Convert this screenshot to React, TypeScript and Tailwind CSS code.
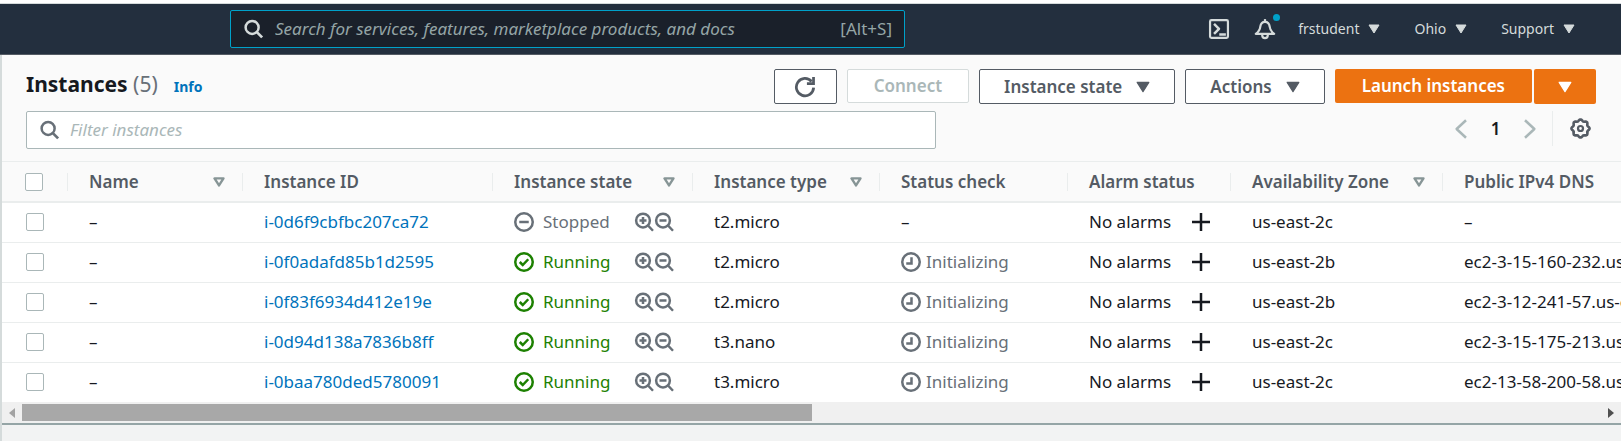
import type { ReactNode } from "react";

type IconProps = { className?: string };

function Icon({ className = "", children }: IconProps & { children: ReactNode }) {
  return (
    <svg
      viewBox="0 0 16 16"
      className={`shrink-0 ${className}`}
      fill="none"
      stroke="currentColor"
      strokeWidth="2"
      strokeLinejoin="round"
      aria-hidden="true"
    >
      {children}
    </svg>
  );
}

const SearchIcon = ({ className }: IconProps) => (
  <Icon className={className}>
    <circle cx="6.5" cy="6.7" r="5.2" />
    <path d="M10.3 10.5 14.5 14.7" strokeWidth="2.2" />
  </Icon>
);

const Caret = ({ className }: IconProps) => (
  <svg viewBox="0 0 12 10" className={`shrink-0 ${className}`} aria-hidden="true">
    <path d="M1 1h10L6 9z" fill="currentColor" stroke="currentColor" strokeLinejoin="round" />
  </svg>
);

const SortIcon = () => (
  <svg viewBox="0 0 12 10" className="h-[10px] w-3 shrink-0 text-[#879596]" aria-hidden="true">
    <path d="M1.5 1.4h9L6 8.4z" fill="none" stroke="currentColor" strokeWidth="2.4" strokeLinejoin="round" />
  </svg>
);

const ZoomIn = () => (
  <Icon className="size-5">
    <circle cx="7.2" cy="6.8" r="5.5" />
    <path d="M11.2 10.8 15.2 15M4.4 6.8H10M7.2 4v5.6" />
  </Icon>
);

const ZoomOut = () => (
  <Icon className="size-5">
    <circle cx="7.2" cy="6.8" r="5.5" />
    <path d="M11.2 10.8 15.2 15M4.4 6.8H10" />
  </Icon>
);

const StoppedIcon = () => (
  <Icon className="size-5">
    <circle cx="8" cy="8" r="7" />
    <path d="M4.2 8h7.6" />
  </Icon>
);

const RunningIcon = () => (
  <Icon className="size-5">
    <circle cx="8" cy="8" r="7" />
    <path d="m4.6 8 2.4 2.4 4.4-4.6" strokeLinejoin="miter" />
  </Icon>
);

const ClockIcon = () => (
  <Icon className="size-5">
    <circle cx="8" cy="8" r="7" />
    <path d="M8.4 4.2v5H4.2" strokeLinejoin="miter" />
  </Icon>
);

const gearPoints = Array.from({ length: 96 }, (_, i) => {
  const a = (i / 96) * Math.PI * 2;
  const r = 6.3 + 0.6 * Math.cos(8 * a);
  return `${(8 + r * Math.cos(a)).toFixed(2)},${(8 + r * Math.sin(a)).toFixed(2)}`;
}).join(" ");

const GearIcon = () => (
  <Icon className="size-[21px]">
    <polygon points={gearPoints} />
    <circle cx="8" cy="8" r="1.9" strokeWidth="1.7" />
  </Icon>
);

type Column = { label: string; width: string; sortable?: boolean };

const columns: Column[] = [
  { label: "Name", width: "w-[175px]", sortable: true },
  { label: "Instance ID", width: "w-[250px]" },
  { label: "Instance state", width: "w-[200px]", sortable: true },
  { label: "Instance type", width: "w-[187px]", sortable: true },
  { label: "Status check", width: "w-[188px]" },
  { label: "Alarm status", width: "w-[163px]" },
  { label: "Availability Zone", width: "w-[212px]", sortable: true },
  { label: "Public IPv4 DNS", width: "w-[420px]" },
];

type Instance = { id: string; running: boolean; type: string; zone: string; dns: string };

const instances: Instance[] = [
  { id: "i-0d6f9cbfbc207ca72", running: false, type: "t2.micro", zone: "us-east-2c", dns: "–" },
  { id: "i-0f0adafd85b1d2595", running: true, type: "t2.micro", zone: "us-east-2b", dns: "ec2-3-15-160-232.us-east-2.compute.amazonaws.com" },
  { id: "i-0f83f6934d412e19e", running: true, type: "t2.micro", zone: "us-east-2b", dns: "ec2-3-12-241-57.us-east-2.compute.amazonaws.com" },
  { id: "i-0d94d138a7836b8ff", running: true, type: "t3.nano", zone: "us-east-2c", dns: "ec2-3-15-175-213.us-east-2.compute.amazonaws.com" },
  { id: "i-0baa780ded5780091", running: true, type: "t3.micro", zone: "us-east-2c", dns: "ec2-13-58-200-58.us-east-2.compute.amazonaws.com" },
];

const Checkbox = ({ label }: { label: string }) => (
  <input
    type="checkbox"
    aria-label={label}
    className="block size-[18px] appearance-none rounded-xs border border-[#aab7b8] bg-white checked:bg-[#0073bb]"
  />
);

function NavMenu({ label }: { label: string }) {
  return (
    <button className="flex items-center gap-[9px]">
      {label}
      <Caret className="h-[10px] w-3" />
    </button>
  );
}

function TopNav() {
  return (
    <header className="flex h-[52px] items-center border-t border-b border-t-[#d5dbdb] border-b-[#545b64] bg-[#232f3e] pr-[46px] pl-[230px] text-[#d5dbdb]">
      <label className="flex h-[38px] w-[675px] items-center rounded-xs border border-[#00a1c9] bg-[#1a202a] pr-3 pl-[13px]">
        <SearchIcon className="size-5" />
        <input
          type="search"
          aria-label="Search"
          placeholder="Search for services, features, marketplace products, and docs"
          className="ml-[11px] min-w-0 flex-1 bg-transparent text-[17px] outline-none placeholder:text-[#95a5a6] placeholder:italic"
        />
        <span className="text-[17px] text-[#95a5a6]">[Alt+S]</span>
      </label>
      <nav className="ml-auto flex items-center text-sm">
        <button aria-label="CloudShell" className="mr-6">
          <Icon className="size-[22px]">
            <rect x="1.5" y="1.5" width="13" height="13" rx="1" strokeWidth="1.6" />
            <path d="M4.4 4.2 8 7.9l-3.6 3.7M8.2 12H13" strokeWidth="1.8" />
          </Icon>
        </button>
        <button aria-label="Notifications" className="relative mr-[22px]">
          <Icon className="size-[22px]">
            <path d="M8 .8v2" strokeWidth="1.6" />
            <path d="M8 2.800C6 2.800 4.900 4.200 4.600 6.200 4.300 8.600 3.400 10 1.300 11.500h13.400C12.600 10 11.700 8.600 11.400 6.200 11.100 4.200 10 2.800 8 2.800z" strokeWidth="1.600" />
            <path d="M6 11.800v1c0 2.500 4 2.500 4 0v-1" strokeWidth="1.600" />
          </Icon>
          <span className="absolute -top-1 -right-1 size-[7px] rounded-full bg-[#00a1c9]" />
        </button>
        <div className="flex gap-[34px]">
          <NavMenu label="frstudent" />
          <NavMenu label="Ohio" />
          <NavMenu label="Support" />
        </div>
      </nav>
    </header>
  );
}

function PanelHeader() {
  const outline = "flex h-[35px] items-center rounded-xs border border-[#545b64] bg-white px-6";
  return (
    <div className="pt-[14px] pr-[25px] pl-6">
      <div className="flex items-start justify-between">
        <div className="flex items-baseline">
          <h1 className="text-[21px] leading-[30px] font-bold">
            Instances <span className="font-normal text-[#687078]">(5)</span>
          </h1>
          <a href="#info" className="ml-4 text-sm font-bold text-[#0073bb]">Info</a>
        </div>
        <div className="flex items-start gap-[10px] text-[17px] font-semibold text-[#545b64]">
          <button aria-label="Refresh" className="flex h-[35px] w-[63px] items-center justify-center rounded-xs border border-[#545b64] bg-white">
            <Icon className="size-[22px]">
              <path d="M14.3 8.5A6.3 6.3 0 1 1 12.800 4" />
              <path d="M14.2.8v4.800H9.400" strokeLinejoin="miter" />
            </Icon>
          </button>
          <button disabled className="h-[34px] rounded-xs border border-[#d5dbdb] bg-white px-[26px] text-[#aab7b8]">Connect</button>
          <button className={outline}>
            Instance state
            <Caret className="ml-[14px] h-3 w-[14px]" />
          </button>
          <button className={outline}>
            Actions
            <Caret className="ml-[14px] h-3 w-[14px]" />
          </button>
          <div className="flex items-start gap-[2px] text-white">
            <button className="h-[34px] rounded-xs bg-[#ec7211] px-[27px]">Launch instances</button>
            <button aria-label="More launch options" className="flex h-[35px] w-[62px] items-center justify-center rounded-xs bg-[#ec7211]">
              <Caret className="h-3 w-[14px]" />
            </button>
          </div>
        </div>
      </div>
      <div className="mt-[7px] flex items-start justify-between pb-3">
        <label className="flex h-[38px] w-[910px] items-center rounded-xs border border-[#aab7b8] bg-white px-[13px] text-[#687078]">
          <SearchIcon className="size-5" />
          <input
            type="search"
            aria-label="Filter instances"
            placeholder="Filter instances"
            className="ml-[10px] min-w-0 flex-1 text-[17px] outline-none placeholder:text-[#aab7b8] placeholder:italic"
          />
        </label>
        <div className="flex h-[35px] items-center text-[#aab7b8]">
          <button aria-label="Previous page">
            <Icon className="size-5"><path d="M12 1 4.500 8l7.500 7" /></Icon>
          </button>
          <button className="w-[49px] text-center text-[17px] font-semibold text-[#16191f]">1</button>
          <button aria-label="Next page">
            <Icon className="size-5"><path d="m4 1 7.500 7L4 15" /></Icon>
          </button>
          <span className="ml-3 h-full w-px bg-[#eaeded]" />
          <button aria-label="Preferences" className="mr-[5px] ml-[17px] text-[#545b64]">
            <GearIcon />
          </button>
        </div>
      </div>
    </div>
  );
}

function InstanceRow({ item }: { item: Instance }) {
  return (
    <tr className="h-10 border-b border-[#eaeded] last:border-b-0 [&>td]:pl-[21px]">
      <td>
        <div className="pl-[3px]"><Checkbox label={`Select ${item.id}`} /></div>
      </td>
      <td>–</td>
      <td><a href={`#${item.id}`} className="text-[#0073bb]">{item.id}</a></td>
      <td>
        <div className="flex items-center">
          <span className={item.running ? "flex w-[120px] items-center gap-[9px] text-[#1d8102]" : "flex w-[120px] items-center gap-[9px] text-[#687078]"}>
            {item.running ? <RunningIcon /> : <StoppedIcon />}
            {item.running ? "Running" : "Stopped"}
          </span>
          <span className="flex text-[#687078]">
            <button aria-label="Include this state in filter"><ZoomIn /></button>
            <button aria-label="Exclude this state from filter"><ZoomOut /></button>
          </span>
        </div>
      </td>
      <td>{item.type}</td>
      <td>
        {item.running ? (
          <span className="flex items-center gap-[5px] text-[#687078]">
            <ClockIcon />
            Initializing
          </span>
        ) : "–"}
      </td>
      <td>
        <div className="flex items-center justify-between pr-5">
          No alarms
          <button aria-label="Add alarm">
            <Icon className="size-5"><path d="M8 .8v14.400M.8 8h14.400" /></Icon>
          </button>
        </div>
      </td>
      <td>{item.zone}</td>
      <td>{item.dns}</td>
    </tr>
  );
}

function InstanceTable() {
  return (
    <div className="overflow-hidden border-t border-[#eaeded]">
      <table className="w-[1861px] table-fixed border-collapse text-[17px] leading-6 whitespace-nowrap">
        <thead className="bg-[#fafafa] text-left text-[#545b64]">
          <tr className="h-10 border-b-2 border-[#eaeded]">
            <th className="w-[66px] p-0">
              <div className="flex h-[18px] items-center border-r border-[#eaeded] pl-[23px]">
                <Checkbox label="Select all instances" />
              </div>
            </th>
            {columns.map((c) => (
              <th key={c.label} className={`p-0 font-semibold ${c.width}`}>
                <div className="flex h-[18px] items-center justify-between border-r border-[#eaeded] pr-[17px] pl-[21px]">
                  {c.label}
                  {c.sortable && <button aria-label={`Sort by ${c.label}`}><SortIcon /></button>}
                </div>
              </th>
            ))}
          </tr>
        </thead>
        <tbody className="bg-white">
          {instances.map((item) => <InstanceRow key={item.id} item={item} />)}
        </tbody>
      </table>
    </div>
  );
}

function ScrollBar() {
  return (
    <div className="flex h-[21px] items-center bg-[#f0f0f0] px-[7px]">
      <svg viewBox="0 0 6 10" className="h-[10px] w-[6px] shrink-0 text-[#a3a3a3]" aria-hidden="true">
        <path d="M6 0v10L0 5z" fill="currentColor" />
      </svg>
      <div className="mx-[7px] h-[17px] flex-1">
        <div className="h-full w-1/2 bg-[#a8a8a8]" />
      </div>
      <svg viewBox="0 0 6 10" className="h-[10px] w-[6px] shrink-0 text-[#505050]" aria-hidden="true">
        <path d="M0 0v10l6-5z" fill="currentColor" />
      </svg>
    </div>
  );
}

export default function App() {
  return (
    <div className="flex min-h-screen flex-col bg-white pt-[3px] font-['Noto_Sans','Open_Sans',sans-serif] text-[#16191f]">
      <TopNav />
      <main className="flex flex-1 flex-col border-l-2 border-[#d5dbdb] bg-[#f2f3f3]">
        <section className="border-b-2 border-[#95a5a6] bg-[#fafafa]">
          <PanelHeader />
          <InstanceTable />
          <ScrollBar />
        </section>
      </main>
    </div>
  );
}
